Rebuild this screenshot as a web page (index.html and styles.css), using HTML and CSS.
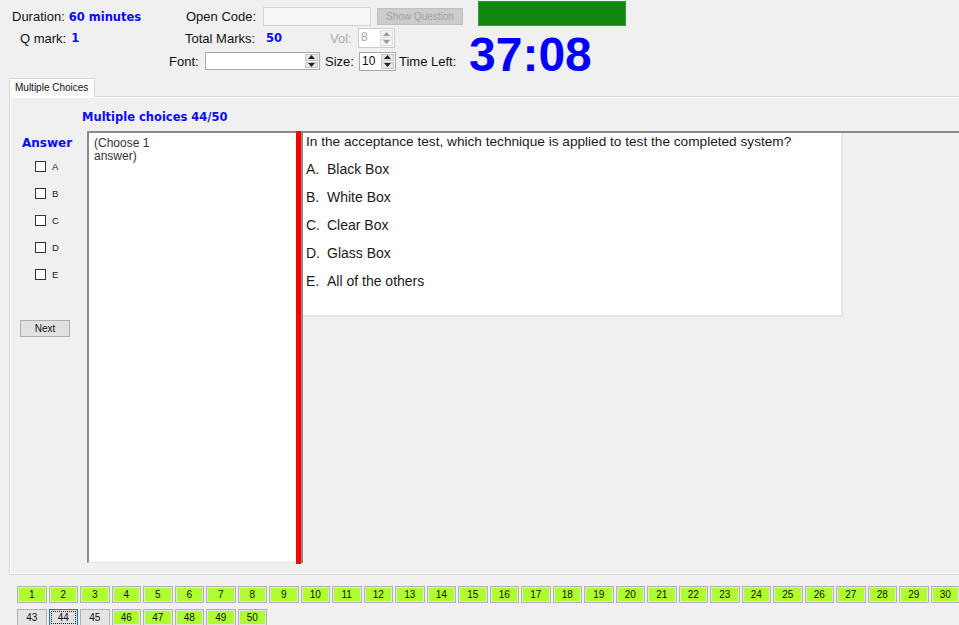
FILE: index.html
```html
<!DOCTYPE html>
<html>
<head>
<meta charset="utf-8">
<title>Exam</title>
<link rel="stylesheet" href="styles.css">
</head>
<body>
<div class="app">
  <header class="top">
    <div class="top-left">
      <div class="row r1">
        <div class="c-dur"><span class="lbl">Duration:</span><span class="val gap4">60 minutes</span></div>
        <span class="lbl w-open">Open Code:</span>
        <div class="open-code"></div>
        <div class="btn-disabled">Show Question</div>
      </div>
      <div class="row r2">
        <div class="c-q"><span class="lbl">Q mark:</span><span class="val gap5">1</span></div>
        <span class="lbl w-total">Total Marks:</span>
        <span class="val w-50">50</span>
        <span class="lbl dim w-vol">Vol:</span>
        <div class="spin spin-s disabled">
          <span class="spin-val">8</span>
          <span class="spin-btns"><span class="sb"><svg width="7" height="4" viewBox="0 0 7 4"><path d="M0 4 L3.5 0 L7 4Z"/></svg></span><span class="sb"><svg width="7" height="4" viewBox="0 0 7 4"><path d="M0 0 L3.5 4 L7 0Z"/></svg></span></span>
        </div>
      </div>
      <div class="row r3">
        <span class="lbl w-font">Font:</span>
        <div class="spin spin-font">
          <span class="spin-val"></span>
          <span class="spin-btns"><span class="sb"><svg width="7" height="4" viewBox="0 0 7 4"><path d="M0 4 L3.5 0 L7 4Z"/></svg></span><span class="sb"><svg width="7" height="4" viewBox="0 0 7 4"><path d="M0 0 L3.5 4 L7 0Z"/></svg></span></span>
        </div>
        <span class="lbl w-size">Size:</span>
        <div class="spin spin-s spin-size">
          <span class="spin-val">10</span>
          <span class="spin-btns"><span class="sb"><svg width="7" height="4" viewBox="0 0 7 4"><path d="M0 4 L3.5 0 L7 4Z"/></svg></span><span class="sb"><svg width="7" height="4" viewBox="0 0 7 4"><path d="M0 0 L3.5 4 L7 0Z"/></svg></span></span>
        </div>
        <span class="lbl w-time">Time Left:</span>
      </div>
    </div>
    <div class="top-right">
      <div class="green"></div>
      <div class="timer">37:08</div>
    </div>
  </header>

  <section class="tabs">
    <div class="tab">Multiple Choices</div>
    <div class="panel">
      <div class="title">Multiple choices 44/50</div>
      <div class="work">
        <div class="answers">
          <div class="ans-h">Answer</div>
          <div class="opt"><span class="cb"></span><span class="opt-l">A</span></div>
          <div class="opt"><span class="cb"></span><span class="opt-l">B</span></div>
          <div class="opt"><span class="cb"></span><span class="opt-l">C</span></div>
          <div class="opt"><span class="cb"></span><span class="opt-l">D</span></div>
          <div class="opt"><span class="cb"></span><span class="opt-l">E</span></div>
          <div class="next">Next</div>
        </div>
        <div class="memo">(Choose 1<br>answer)</div>
        <div class="split"></div>
        <div class="qpane">
          <div class="qbox">
            <div class="qtext">In the acceptance test, which technique is applied to test the completed system?</div>
            <div class="qopt first"><span class="ql">A.</span>Black Box</div>
            <div class="qopt"><span class="ql">B.</span>White Box</div>
            <div class="qopt"><span class="ql">C.</span>Clear Box</div>
            <div class="qopt"><span class="ql">D.</span>Glass Box</div>
            <div class="qopt"><span class="ql">E.</span>All of the others</div>
          </div>
        </div>
      </div>
    </div>
  </section>

  <nav class="qnav">
    <div class="qrow">
      <div class="q done"><span>1</span></div><div class="q done"><span>2</span></div><div class="q done"><span>3</span></div><div class="q done"><span>4</span></div><div class="q done"><span>5</span></div><div class="q done"><span>6</span></div><div class="q done"><span>7</span></div><div class="q done"><span>8</span></div><div class="q done"><span>9</span></div><div class="q done"><span>10</span></div>
      <div class="q done"><span>11</span></div><div class="q done"><span>12</span></div><div class="q done"><span>13</span></div><div class="q done"><span>14</span></div><div class="q done"><span>15</span></div><div class="q done"><span>16</span></div><div class="q done"><span>17</span></div><div class="q done"><span>18</span></div><div class="q done"><span>19</span></div><div class="q done"><span>20</span></div>
      <div class="q done"><span>21</span></div><div class="q done"><span>22</span></div><div class="q done"><span>23</span></div><div class="q done"><span>24</span></div><div class="q done"><span>25</span></div><div class="q done"><span>26</span></div><div class="q done"><span>27</span></div><div class="q done"><span>28</span></div><div class="q done"><span>29</span></div><div class="q done"><span>30</span></div>
    </div>
    <div class="qrow">
      <div class="q"><span>43</span></div><div class="q current"><span>44</span></div><div class="q"><span>45</span></div><div class="q done"><span>46</span></div><div class="q done"><span>47</span></div><div class="q done"><span>48</span></div><div class="q done"><span>49</span></div><div class="q done"><span>50</span></div>
    </div>
  </nav>
</div>
</body>
</html>
```

FILE: styles.css
```css
html, body {
  margin: 0;
  padding: 0;
  background: #f0f0f0;
  overflow: hidden;
}
.app {
  width: 959px;
  height: 625px;
  overflow: hidden;
  font-family: "Liberation Sans", Arial, sans-serif;
  color: #000;
}

/* ---------- header ---------- */
.top {
  display: flex;
  align-items: flex-start;
  height: 78px;
}
.top-left {
  width: 469px;
  flex: none;
  padding-top: 5px;
  box-sizing: border-box;
}
.row {
  display: flex;
  align-items: center;
  white-space: nowrap;
}
.r1 { height: 23px; padding-left: 12px; }
.r2 { height: 20px; padding-left: 20px; }
.r3 { height: 20px; margin-top: 3px; padding-left: 169px; }

.lbl {
  font-size: 13px;
  color: #111;
}
.lbl.dim { color: #a8a8a8; }
.val {
  font-family: "DejaVu Sans", Verdana, sans-serif;
  font-weight: bold;
  font-size: 11.5px;
  color: #0a0aff;
}
.gap4 { margin-left: 4px; }
.gap5 { margin-left: 5px; }

.c-dur { width: 174px; flex: none; display: flex; align-items: center; }
.c-q { width: 165px; flex: none; display: flex; align-items: center; }
.w-open { width: 77px; flex: none; }
.w-total { width: 81px; flex: none; }
.w-50 { width: 64px; flex: none; }
.w-vol { width: 28px; flex: none; }
.w-font { width: 36px; flex: none; }
.w-size { width: 34px; flex: none; margin-left: 5px; }
.w-time { margin-left: 3px; }

.open-code {
  width: 108px;
  height: 19px;
  box-sizing: border-box;
  border: 1px solid #d6d6d6;
  background: #f6f6f6;
  margin-right: 6px;
  flex: none;
}
.btn-disabled {
  width: 86px;
  height: 17px;
  box-sizing: border-box;
  border: 1px solid #bfbfbf;
  background: #cccccc;
  color: #a2a2a2;
  font-size: 10px;
  line-height: 15px;
  text-align: center;
  flex: none;
}

.spin {
  display: flex;
  box-sizing: border-box;
  border: 1px solid #a9a9a9;
  background: #fff;
  flex: none;
}
.spin-s { width: 37px; height: 20px; }
.spin-size { height: 19px; }
.spin-font { width: 115px; height: 18px; }
.spin-val {
  flex: 1;
  font-size: 12px;
  line-height: 17px;
  padding-left: 2px;
  color: #111;
}
.spin-btns {
  width: 13px;
  display: flex;
  flex-direction: column;
  padding: 1px;
  gap: 1px;
}
.sb {
  flex: 1;
  display: flex;
  align-items: center;
  justify-content: center;
  background: #e8e8e8;
  border: 1px solid #c4c4c4;
}
.sb svg path { fill: #222; }
.spin.disabled { border-color: #cccccc; }
.spin.disabled .spin-val { color: #a8a8a8; }
.spin.disabled .sb { background: #f2f2f2; border-color: #dcdcdc; }
.spin.disabled .sb svg path { fill: #9a9a9a; }

.top-right {
  padding-top: 1px;
}
.green {
  margin-left: 9px;
  width: 148px;
  height: 25px;
  box-sizing: border-box;
  background: #10880e;
  border: 1px solid #2aa028;
}
.timer {
  margin-top: 5px;
  font-family: "Liberation Sans", Arial, sans-serif;
  font-weight: bold;
  font-size: 48px;
  line-height: 47px;
  color: #0000ff;
  white-space: nowrap;
}

/* ---------- tabs ---------- */
.tabs {
  margin-left: 9px;
}
.tab {
  position: relative;
  z-index: 1;
  width: 86px;
  height: 19px;
  box-sizing: border-box;
  border: 1px solid #d9d9d9;
  border-bottom: none;
  background: #fcfcfc;
  font-size: 10px;
  line-height: 17px;
  padding-left: 5px;
  margin-bottom: -1px;
  color: #111;
}
.panel {
  width: 970px;
  height: 479px;
  box-sizing: border-box;
  border: 1px solid #d9d9d9;
  box-shadow: inset 1px 1px 0 #fff, inset -1px -1px 0 #fff;
  background: #f0f0f0;
}
.title {
  padding: 12px 0 0 72px;
  line-height: 16px;
  font-family: "DejaVu Sans", Verdana, sans-serif;
  font-weight: bold;
  font-size: 11.5px;
  color: #0a0aff;
}
.work {
  margin-top: 6px;
  display: flex;
  height: 432px;
}
.answers {
  width: 77px;
  flex: none;
}
.ans-h {
  padding: 4px 0 0 12px;
  line-height: 16px;
  font-family: "DejaVu Sans", Verdana, sans-serif;
  font-weight: bold;
  font-size: 12px;
  color: #0a0aff;
}
.opt {
  height: 27px;
  display: flex;
  align-items: center;
  padding-left: 25px;
}
.ans-h + .opt { margin-top: 2px; }
.cb {
  width: 11px;
  height: 11px;
  box-sizing: border-box;
  border: 1px solid #333;
  background: #fff;
  margin-right: 6px;
  flex: none;
}
.opt-l {
  font-size: 9.5px;
  color: #222;
}
.next {
  margin: 32px 0 0 10px;
  width: 50px;
  height: 17px;
  box-sizing: border-box;
  border: 1px solid #adadad;
  background: #e1e1e1;
  font-size: 10px;
  line-height: 15px;
  text-align: center;
  color: #111;
}
.memo {
  width: 209px;
  flex: none;
  box-sizing: border-box;
  background: #fff;
  border-top: 2px solid #8a8a8a;
  border-left: 2px solid #8a8a8a;
  border-bottom: 1px solid #e3e3e3;
  padding: 4px 5px;
  font-size: 12px;
  line-height: 13px;
  color: #333;
}
.split {
  width: 5px;
  flex: none;
  height: 433px;
  background: #ff0000;
}
.qpane {
  flex: 1;
  border-top: 2px solid #8a8a8a;
  border-left: 2px solid #8a8a8a;
}
.qbox {
  width: 540px;
  height: 184px;
  box-sizing: border-box;
  background: #fff;
  border-right: 2px solid #e6e6e6;
  border-bottom: 2px solid #e6e6e6;
  padding: 1px 0 0 3px;
  color: #1a1a1a;
}
.qtext {
  font-size: 13.65px;
  line-height: 16px;
  white-space: nowrap;
}
.qopt {
  display: flex;
  font-size: 14px;
  line-height: 28px;
}
.qopt.first { margin-top: 5px; }
.ql {
  width: 21px;
  flex: none;
}

/* ---------- question navigator ---------- */
.qnav {
  margin-top: 11px;
  padding-left: 17px;
  display: flex;
  flex-direction: column;
  gap: 6px;
}
.qrow {
  display: flex;
  gap: 2px;
  height: 17px;
}
.q {
  width: 29.5px;
  height: 17px;
  flex: none;
  box-sizing: border-box;
  border: 1px solid #b2b2b2;
  background: #e4e4e4;
  padding: 1px;
}
.q span {
  display: block;
  height: 13px;
  font-size: 10px;
  line-height: 13px;
  text-align: center;
  color: #111;
}
.q.done span { background: #adff2f; }
.q.current {
  border-color: #0078d7;
  background: #e1e1e1;
}
.q.current span {
  outline: 1px dotted #222;
  outline-offset: -1px;
}
```
